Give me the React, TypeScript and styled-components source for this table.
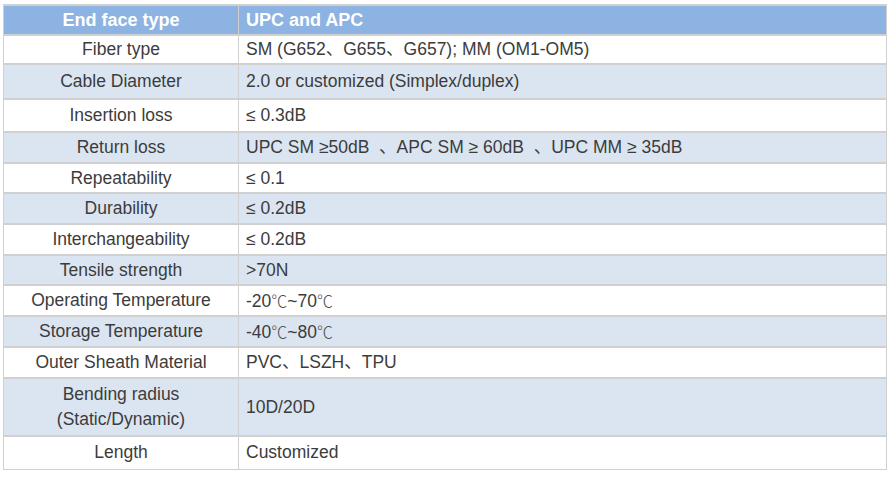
import React from "react";
import styled, { createGlobalStyle } from "styled-components";

const Global = createGlobalStyle`
  html, body { margin: 0; padding: 0; background: #ffffff; }
  body { font-family: "Liberation Sans", "Noto Sans CJK SC", Arial, sans-serif; }
`;

const Page = styled.div`
  padding: 4px 0 0 3px;
`;

const Table = styled.table`
  width: 884px;
  border-collapse: collapse;
  table-layout: fixed;
  font-family: "Liberation Sans", "Noto Sans CJK SC", Arial, sans-serif;
  font-size: 17.5px;
  color: #3c3c3c;
`;

const Row = styled.tr<{ $h: number; $shade: "head" | "alt" | "plain" }>`
  height: ${(p) => p.$h}px;
  background: ${(p) =>
    p.$shade === "head" ? "#8db3e2" : p.$shade === "alt" ? "#dbe5f1" : "#ffffff"};
`;

const Cell = styled.td<{ $head?: boolean; $label?: boolean }>`
  border: 1px solid #d0d0d0;
  border-top-width: 2px;
  padding: 0 0 0 ${(p) => (p.$label ? 0 : 7)}px;
  text-align: ${(p) => (p.$label ? "center" : "left")};
  vertical-align: middle;
  line-height: 25px;
  font-weight: ${(p) => (p.$head ? 700 : 400)};
  font-size: ${(p) => (p.$head ? "18px" : "17.5px")};
  color: ${(p) => (p.$head ? "#ffffff" : "#3c3c3c")};
  white-space: pre;
`;

const Degree = styled.span`
  font-family: "Noto Sans CJK SC", sans-serif;
  font-weight: 300;
  font-size: 16px;
  color: #505050;
`;

const C = () => <Degree>℃</Degree>;

const rows: { label: React.ReactNode; value: React.ReactNode; h: number }[] = [
  { label: "Fiber type", value: "SM (G652、G655、G657); MM (OM1-OM5)", h: 29 },
  { label: "Cable Diameter", value: "2.0 or customized (Simplex/duplex)", h: 35 },
  { label: "Insertion loss", value: "≤ 0.3dB", h: 33 },
  { label: "Return loss", value: "UPC SM ≥50dB  、APC SM ≥ 60dB  、UPC MM ≥ 35dB", h: 31 },
  { label: "Repeatability", value: "≤ 0.1", h: 30 },
  { label: "Durability", value: "≤ 0.2dB", h: 31 },
  { label: "Interchangeability", value: "≤ 0.2dB", h: 31 },
  { label: "Tensile strength", value: ">70N", h: 30 },
  { label: "Operating Temperature", value: <>-20<C />~70<C /></>, h: 31 },
  { label: "Storage Temperature", value: <>-40<C />~80<C /></>, h: 31 },
  { label: "Outer Sheath Material", value: "PVC、LSZH、TPU", h: 31 },
  {
    label: (
      <>
        Bending radius
        <br />
        (Static/Dynamic)
      </>
    ),
    value: "10D/20D",
    h: 58,
  },
  { label: "Length", value: "Customized", h: 33 },
];

export default function App() {
  return (
    <Page>
      <Global />
      <Table>
        <colgroup>
          <col style={{ width: 235 }} />
          <col />
        </colgroup>
        <tbody>
          <Row $h={30} $shade="head">
            <Cell $head $label>End face type</Cell>
            <Cell $head>UPC and APC</Cell>
          </Row>
          {rows.map((r, i) => (
            <Row key={i} $h={r.h} $shade={i % 2 === 1 ? "alt" : "plain"}>
              <Cell $label>{r.label}</Cell>
              <Cell>{r.value}</Cell>
            </Row>
          ))}
        </tbody>
      </Table>
    </Page>
  );
}
